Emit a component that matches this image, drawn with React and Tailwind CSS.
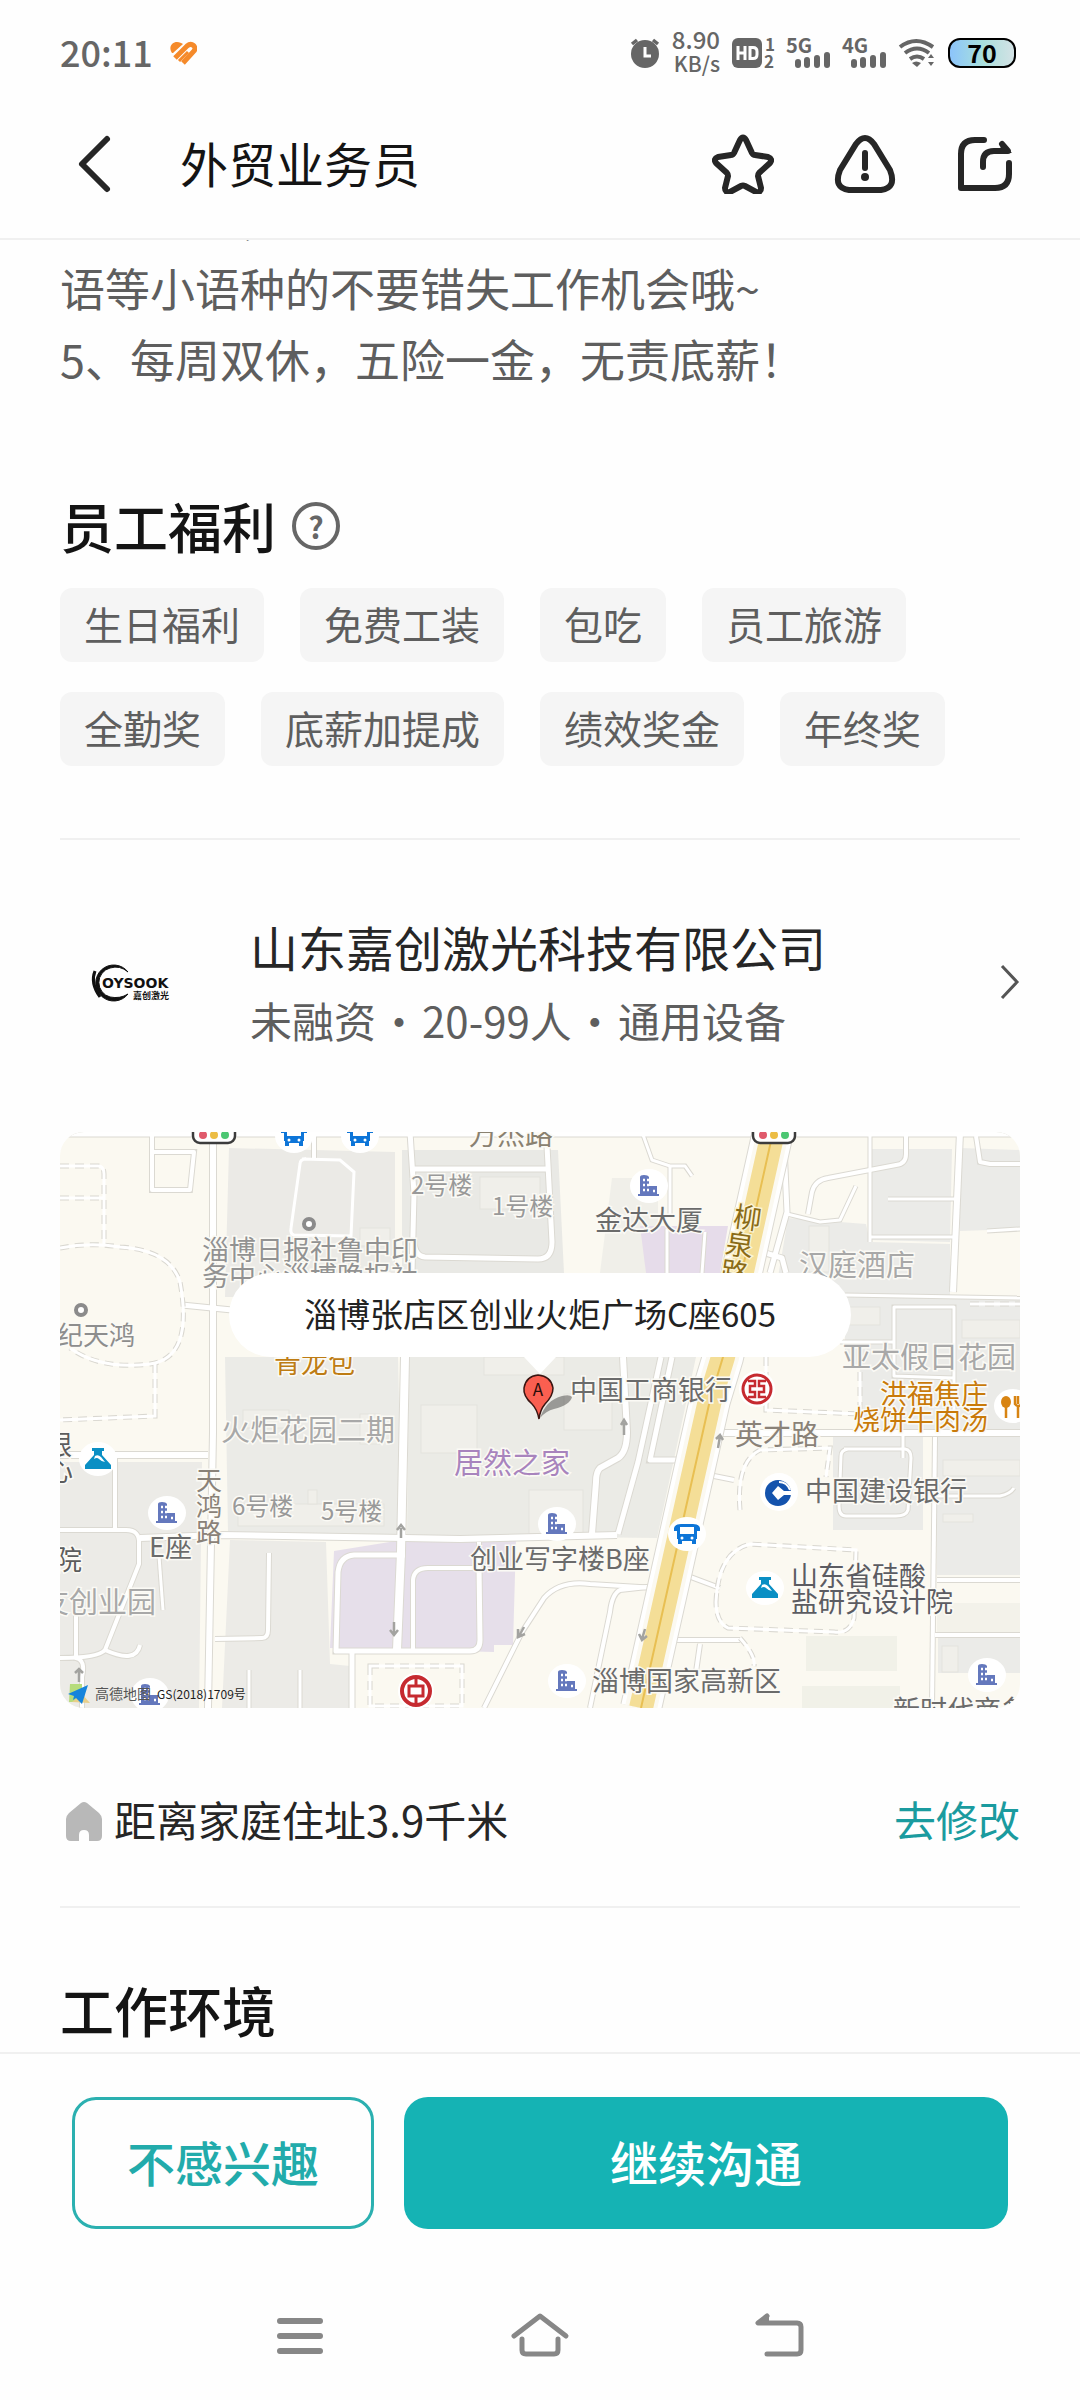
const BENEFITS = [
  "生日福利",
  "免费工装",
  "包吃",
  "员工旅游",
  "全勤奖",
  "底薪加提成",
  "绩效奖金",
  "年终奖",
];

// street map geometry, all in the map's own 960x576 space
const BLOCKS = [
  ["169,16 335,20 335,165 165,165", "#ebeae6"],
  ["342,18 498,18 504,141 342,141", "#e9e9e5"],
  ["165,225 338,225 342,403 168,400", "#ebebe7"],
  ["349,225 636,225 597,406 347,403", "#ebebe6"],
  ["0,330 142,330 139,576 0,576", "#ecebe7"],
  ["170,408 266,410 270,532 290,534 290,576 162,576", "#ecebe7"],
  ["274,419 342,408 456,408 453,513 434,513 434,520 270,516", "#e6dfea"],
  ["552,46 598,46 598,141 540,141", "#f0efe9"],
  ["580,94 668,94 660,141 586,141", "#e6dcea"],
  ["810,17 892,17 890,110 810,108", "#ebebe8"],
  ["728,86 806,92 810,110 890,112 890,163 715,163", "#ebebe8"],
  ["900,16 960,18 960,97 900,99", "#ebebe8"],
  ["785,164 960,166 960,300 804,300 800,236 785,225", "#ebebe8"],
  ["773,303 863,303 863,398 773,398", "#ebebe8"],
  ["877,305 960,305 960,443 877,443", "#ebebe8"],
  ["878,505 960,505 960,541 878,541", "#ebebe8"],
  ["746,504 837,504 837,539 746,539", "#f1f1e8"],
  ["742,554 840,554 840,576 742,576", "#f1f1e8"],
  ["877,471 960,471 960,502 877,502", "#f3f2ea"],
];

const BUILDINGS = [
  [420, 45, 60, 32],
  [300, 96, 30, 18],
  [183, 278, 46, 18],
  [300, 282, 20, 30],
  [178, 372, 146, 22],
  [248, 358, 9, 14],
  [361, 273, 56, 48],
  [424, 225, 80, 18],
  [504, 262, 48, 36],
  [469, 358, 54, 44],
  [749, 94, 20, 46],
  [770, 175, 50, 18],
  [902, 188, 58, 18],
  [883, 328, 77, 16],
  [883, 382, 30, 8],
  [882, 514, 16, 26],
];

const ROADS = [
  ["M0 2H960", 5],
  ["M153 0V300L148 576", 6],
  ["M92 0V58H130L134 20H94", 4],
  ["M254 0V26", 4],
  ["M350 0L354 62L352 141", 5],
  ["M354 37H488", 5],
  ["M487 14L492 110Q492 127 478 127L365 125Q354 124 354 108", 5],
  ["M122 173L172 178", 5],
  ["M345 225L341 420L337 518", 8],
  ["M0 323H148", 6],
  ["M55 323V396", 4],
  ["M80 406L160 403L345 406L400 407L557 403", 6],
  ["M0 398H66Q80 398 79 412V432L45 518Q38 526 0 526", 4],
  ["M16 480V526Q26 528 22 545V576", 4],
  ["M45 518Q76 532 80 513", 4],
  ["M99 424L103 478", 3],
  ["M155 507L202 506Q208 506 208 498L209 421", 4],
  ["M189 538V576M240 538V576", 3],
  ["M345 423H294Q280 424 278 440L276 519H410Q420 519 420 508L419 434", 5],
  ["M353 519V448Q354 436 368 436H419V410", 4],
  ["M292 520V576", 5],
  ["M563 225L567 300Q567 320 558 326L540 336Q536 340 536 350L532 402", 6],
  ["M601 225L578 330L558 402", 5],
  ["M612 225L590 328H626", 5],
  ["M696 0L686 60", 3],
  ["M724 14L727 80L710 141M702 120L722 126L726 141", 5],
  ["M727 82L760 90L780 88L796 54", 3],
  ["M748 82L752 60Q755 48 768 46L836 33Q846 32 846 22V4", 4],
  ["M810 4V110", 3],
  ["M900 0L893 160", 6],
  ["M828 67H897M810 105H894M927 99L960 97", 3],
  ["M916 4L920 30L930 32H960", 4],
  ["M785 163L960 166", 3],
  ["M780 210H834V175H894V300M834 210V244L894 246", 3],
  ["M657 301H960", 6],
  ["M875 305L872 576", 4],
  ["M877 448H960M875 503H960", 4],
  ["M784 317H845Q851 318 851 326L848 378Q846 384 836 384H786Q779 384 779 374L781 324Q781 318 788 317", 3],
  ["M843 301V326", 3],
  ["M877 364H940Q950 362 954 356", 3],
  ["M580 141V225M607 97V141M645 100L642 141", 3],
  ["M582 0L592 28L610 34H625L632 44", 3],
  ["M610 34V82", 3],
  ["M654 344L674 348M628 444L660 456M614 508H680M640 512L636 540", 4],
  ["M596 454L560 458Q552 462 550 480L530 576", 4],
  ["M596 456L530 452Q500 448 484 466L462 500L424 576", 4],
];

const DASHED = [
  "M0 34H38Q44 34 44 42V114M0 66H44",
  "M0 116Q30 110 60 115Q110 118 120 150Q134 226 90 232Q40 238 10 216",
  "M95 232V284L0 288",
  "M706 225V278L800 282M800 240V300",
  "M680 378Q676 330 700 318L770 316L766 345",
  "M656 470Q658 420 690 412L796 418L794 486Q790 502 774 500L668 496Q656 490 656 470",
  "M310 534H402V574H310Z",
  "M680 506Q696 524 694 534",
  "M910 172H960",
];

const MAP_LABELS = [
  ["万杰路", 409, 13, 28, "#8a8170"],
  ["2号楼", 351, 62, 24, "#999999"],
  ["1号楼", 432, 83, 24, "#999999"],
  ["金达大厦", 535, 98, 27, "#6b6b6b"],
  ["淄博日报社鲁中印", 142, 128, 27, "#929292"],
  ["务中心淄博晚报社", 142, 154, 27, "#929292"],
  ["纪天鸿", -3, 213, 26, "#8d8d8d"],
  ["青龙包", 214, 241, 27, "#be7c14"],
  ["中国工商银行", 510, 268, 27, "#6b6b6b"],
  ["汉庭酒店", 739, 144, 29, "#a8a8a8"],
  ["亚太假日花园", 782, 236, 29, "#a8a8a8"],
  ["洪福焦庄", 820, 272, 27, "#c97a0a"],
  ["烧饼牛肉汤", 793, 298, 27, "#c97a0a"],
  ["火炬花园二期", 161, 309, 29, "#a8a8a8"],
  ["银", -15, 323, 27, "#5c5c5c"],
  ["心", -14, 349, 27, "#5c5c5c"],
  ["天", 136, 358, 26, "#8a8278"],
  ["鸿", 136, 384, 26, "#8a8278"],
  ["路", 136, 410, 26, "#8a8278"],
  ["6号楼", 172, 383, 24, "#999999"],
  ["5号楼", 261, 388, 24, "#999999"],
  ["E座", 89, 425, 27, "#6b6b6b"],
  ["院", -5, 438, 27, "#5c5c5c"],
  ["友创业园", -20, 481, 29, "#a8a8a8"],
  ["居然之家", 394, 342, 29, "#a884bd"],
  ["英才路", 675, 313, 28, "#8a8278"],
  ["中国建设银行", 745, 369, 27, "#6b6b6b"],
  ["创业写字楼B座", 410, 437, 27, "#6b6b6b"],
  ["山东省硅酸", 731, 454, 27, "#5c5c62"],
  ["盐研究设计院", 731, 480, 27, "#5c5c62"],
  ["淄博国家高新区", 532, 559, 27, "#6b6b6b"],
  ["新时代商务", 833, 588, 27, "#6b6b6b"],
];

function Signal({ label }) {
  return (
    <svg viewBox="0 0 46 32" className="h-8 w-[46px] overflow-visible" fill="#666666">
      <text x="0" y="16" fontSize="20" fontWeight="700">{label}</text>
      <rect x="9" y="22" width="6" height="9" rx="3" />
      <rect x="18" y="20" width="6" height="11" rx="3" />
      <rect x="28" y="18" width="6" height="13" rx="3" />
      <rect x="38" y="15" width="6" height="16" rx="3" />
    </svg>
  );
}

function StatusBar() {
  return (
    <div className="flex h-[90px] items-center pt-4 pr-16 pl-[60px] text-[#666666]">
      <span className="pb-1 text-4xl leading-none font-medium">20:11</span>
      <svg viewBox="0 0 28 25" className="ml-4 h-[25px] w-7" fill="none" stroke="#f58a2a" strokeLinecap="butt">
        <path d="M3 12C-1 6 3 1 8 1c3 0 4 1 6 2L4 12z" fill="#f58a2a" stroke="none" />
        <path d="M6 17L18 5c5-4 10 1 7 5L14 22" strokeWidth="5" />
        <path d="M10 20l9-9" strokeWidth="3" />
      </svg>
      <div className="ml-auto flex items-center">
        <svg viewBox="0 0 30 30" className="size-[30px]">
          <circle cx="15" cy="16" r="14" fill="#666666" />
          <path d="M2 6l5-4M28 6l-5-4" stroke="#666666" strokeWidth="3.500" />
          <path d="M15 9v9h6" fill="none" stroke="#ffffff" strokeWidth="3" />
        </svg>
        <div className="ml-3 flex flex-col items-end pb-1 text-2xl leading-[24px] font-medium">
          <span>8.90</span>
          <span className="text-[21px] leading-[24px]">KB/s</span>
        </div>
        <svg viewBox="0 0 44 32" className="ml-3 h-8 w-11 overflow-visible" fill="#666666">
          <rect x="0" y="1" width="30" height="30" rx="6" />
          <path d="M6 9v14M13 9v14M6 16h7M18 10.500h3q4 0 4 4v3q0 4-4 4h-3z" fill="none" stroke="#ffffff" strokeWidth="3" />
          <text x="33" y="14" fontSize="17" fontWeight="700">1</text>
          <text x="32" y="31" fontSize="17" fontWeight="700">2</text>
        </svg>
        <div className="ml-2.5 flex gap-2.5">
          <Signal label="5G" />
          <Signal label="4G" />
        </div>
        <svg viewBox="0 0 38 30" className="ml-2.5 h-[30px] w-[38px]" fill="none" stroke="#666666" strokeWidth="4">
          <path d="M2 9q16-12 33 0M7 15q12-9 24 0M12 21q7-5 14 0" />
          <path d="M14 25q4-3 9 0l-4 4z" fill="#666666" stroke="none" />
          <path d="M30 20l3-4 3 4zM30 24l3 4 3-4z" fill="#666666" stroke="none" />
        </svg>
        <span className="ml-3 flex h-[30px] w-[68px] items-center justify-center rounded-xl border-2 border-black bg-linear-to-r from-[#8cc4fb] via-[#a8dfdc] to-[#d3e2e5] pb-0.5 text-[25px] leading-none font-bold text-black">
          70
        </span>
      </div>
    </div>
  );
}

function TopBar() {
  return (
    <header className="sticky top-0 z-10 border-b-2 border-[#f0f0f0] bg-[#fefefe]">
      <StatusBar />
      <div className="flex h-[148px] items-center pr-[66px] pl-[76px] text-[#262626]">
        <button aria-label="返回">
          <svg viewBox="0 0 36 60" className="h-[60px] w-9" fill="none" stroke="currentColor" strokeWidth="6" strokeLinecap="round" strokeLinejoin="round">
            <path d="M31 5L6 30l25 25" />
          </svg>
        </button>
        <h1 className="ml-[68px] pb-1 text-5xl leading-none text-[#141414]">外贸业务员</h1>
        <div className="ml-auto flex items-center gap-[60px]">
          <button aria-label="收藏">
            <svg viewBox="0 0 62 60" className="h-[60px] w-[62px]" fill="none" stroke="currentColor" strokeWidth="6" strokeLinejoin="round">
              <path d="M28 6q3-5 6 0l6 13q1 2 3 2l13 2q5 2 2 6L47 39q-1 1-1 3l3 12q0 5-5 4L33 52q-2-1-4 0l-11 6q-5 1-5-4l3-12q0-2-1-3L4 29q-3-4 2-6l13-2q2 0 3-2z" />
            </svg>
          </button>
          <button aria-label="举报">
            <svg viewBox="0 0 62 60" className="h-[60px] w-[62px]" fill="none" stroke="currentColor" strokeWidth="6" strokeLinecap="round">
              <path d="M22 10q9-12 18 0l16 26q7 18-9 20H15Q-1 54 6 36z" />
              <path d="M31 19v15" />
              <circle cx="31" cy="43" r="4" fill="currentColor" stroke="none" />
            </svg>
          </button>
          <button aria-label="分享">
            <svg viewBox="0 0 58 60" className="h-[60px] w-[58px]" fill="none" stroke="currentColor" strokeWidth="6" strokeLinecap="round" strokeLinejoin="round">
              <path d="M28 6H19Q5 6 5 20v34h34q14 0 14-14V29" />
              <path d="M27 33v-5q0-11 11-11h14l-6-7" />
              <path d="M45 9l11 10H44z" fill="currentColor" stroke="none" />
            </svg>
          </button>
        </div>
      </div>
    </header>
  );
}

function BuildingPin({ x, y }) {
  return (
    <g transform={`translate(${x} ${y})`}>
      <ellipse rx="19" ry="17" fill="#ffffff" />
      <path d="M-11 10v-2h2V-9q0-2 4-2t5 2V0h8v8h2v2z" fill="#6478bd" />
      <path d="M-6-6h2M-2-6h2M-6-1h2M-2-1h2M-6 4h2M-2 4h2M4 5h2" stroke="#ffffff" strokeWidth="2.500" />
    </g>
  );
}

function BusPin({ x, y }) {
  return (
    <g transform={`translate(${x} ${y})`}>
      <ellipse rx="19" ry="17" fill="#ffffff" />
      <path d="M-13-3v-3q1-4 7-4H6q6 0 7 4v3h-3V5h-1v5H5V7H-5v3h-4V5h-1v-8z" fill="#0d75d8" />
      <path d="M-7-7H7v7H-7z" fill="#ffffff" />
      <circle cx="-5" cy="4" r="1.500" fill="#ffffff" />
      <circle cx="5" cy="4" r="1.500" fill="#ffffff" />
    </g>
  );
}

function FlaskPin({ x, y }) {
  return (
    <g transform={`translate(${x} ${y})`}>
      <ellipse rx="19" ry="17" fill="#ffffff" />
      <path d="M-6-11H6v3H4v4l9 10v4h-26V6l9-10v-4h-2z" fill="#0a8fc4" />
      <path d="M-3-3q3-2 6 1l4 5q-3 0-6-3-2-2-5 0z" fill="#ffffff" />
    </g>
  );
}

function TrafficLight({ x }) {
  return (
    <g>
      <rect x={x} y="-10" width="42" height="21" rx="7" fill="#ffffff" stroke="#3c3c3c" strokeWidth="2.500" />
      <circle cx={x + 10} cy="3" r="4" fill="#e05a6c" />
      <circle cx={x + 21} cy="3" r="4" fill="#ecbd45" />
      <circle cx={x + 32} cy="3" r="4" fill="#4cc773" />
    </g>
  );
}

function OfficeMap() {
  return (
    <div className="relative mt-[78px] overflow-hidden rounded-3xl">
      <svg viewBox="0 0 960 576" className="block h-auto w-full bg-[#fbf9f1]">
        {BLOCKS.map(([points, fill]) => (
          <polygon key={points} points={points} fill={fill} />
        ))}
        {BUILDINGS.map(([x, y, w, h]) => (
          <rect key={`${x}-${y}`} x={x} y={y} width={w} height={h} fill="#f0efea" stroke="#e4e3dd" />
        ))}

        <g fill="none" stroke="#dbd9d2">
          {ROADS.map(([d, w]) => <path key={d} d={d} strokeWidth={w + 2} />)}
        </g>
        <g fill="none" stroke="#ffffff" strokeLinejoin="round">
          {ROADS.map(([d, w]) => <path key={d} d={d} strokeWidth={w} />)}
        </g>
        <g fill="none">
          {DASHED.map((d) => <path key={d} d={d} stroke="#d9d7d0" strokeWidth="5" strokeDasharray="9 6" />)}
          {DASHED.map((d) => <path key={d} d={d} stroke="#ffffff" strokeWidth="3" />)}
        </g>
        <path d="M242 27L280 28L294 40L291 104L234 103Q230 102 231 96L240 32Q240 27 246 27" fill="none" stroke="#ffffff" strokeWidth="3" />

        <path d="M713 0L663 225L650 268L581 576" fill="none" stroke="#dbd9d2" strokeWidth="42" />
        <path d="M713 0L663 225L650 268L581 576" fill="none" stroke="#ffffff" strokeWidth="40" />
        <path d="M713 0L663 225L650 268L581 576" fill="none" stroke="#fbf9f1" strokeWidth="32" />
        <path d="M713 0L663 225L650 268L581 576" fill="none" stroke="#f4de97" strokeWidth="24" />
        <path d="M713 0L663 225L650 268L581 576" fill="none" stroke="#e8bf52" strokeWidth="2" />

        <g fill="none" stroke="#a3a3a0" strokeWidth="2.500">
          <path d="M341 406v-10M337 398l4-5 4 5M334 490v12M330 498l4 5 4-5" />
          <path d="M564 303v-12M561 293l3-5 3 5M464 495l-5 9M458 497v8l7-3" />
          <path d="M658 316l2-12M656 307l4-4 3 5M585 497l-3 10M579 502l3 6 5-4M19 550v-12M15 541l4-4 4 4" />
        </g>

        <g fill="#ffffff" stroke="#8b8b8b" strokeWidth="4">
          <circle cx="249" cy="92" r="5" />
          <circle cx="21" cy="178" r="5" />
        </g>

        {MAP_LABELS.map(([text, x, y, size, fill]) => (
          <text key={`${text}-${y}`} x={x} y={y} fontSize={size} fill={fill} stroke="#fbfaf5" strokeWidth="3" paintOrder="stroke">
            {text}
          </text>
        ))}
        <g fontSize="28" fill="#8a6b16" stroke="#fbf3d4" strokeWidth="3" paintOrder="stroke" textAnchor="middle">
          <text transform="translate(686 96) rotate(8)">柳</text>
          <text transform="translate(678 123) rotate(8)">泉</text>
          <text transform="translate(673 151) rotate(8)">路</text>
        </g>

        <TrafficLight x={133} />
        <TrafficLight x={693} />
        <BusPin x={234} y={4} />
        <BusPin x={300} y={4} />
        <BusPin x={627} y={402} />
        <BuildingPin x={589} y={54} />
        <BuildingPin x={107} y={381} />
        <BuildingPin x={497} y={392} />
        <BuildingPin x={507} y={549} />
        <BuildingPin x={927} y={543} />
        <BuildingPin x={90} y={563} />
        <FlaskPin x={38} y={327} />
        <FlaskPin x={705} y={456} />

        {/* bank logos */}
        <g fill="none" stroke="#c62a30" strokeWidth="2.500">
          <circle cx="697" cy="257" r="18" fill="#ffffff" stroke="none" />
          <circle cx="697" cy="257" r="14" strokeWidth="3" />
          <path d="M688 249h7v5h-5v6h5v5h-7M706 249h-7v5h5v6h-5v5h7" />
          <circle cx="356" cy="559" r="18" fill="#ffffff" stroke="none" />
          <circle cx="356" cy="559" r="14" strokeWidth="4" />
          <path d="M349 554h14v10h-14zM356 545v9M356 564v9" strokeWidth="3" />
        </g>
        <circle cx="719" cy="360" r="19" fill="#ffffff" />
        <circle cx="718" cy="361" r="13" fill="#1453ad" />
        <path d="M718 354l6 5h9v4h-9l-6 5-6-7z" fill="#ffffff" />
        <path d="M719 350q8 0 11 8" fill="none" stroke="#ffffff" strokeWidth="2" />
        <ellipse cx="953" cy="274" rx="19" ry="17" fill="#ffffff" />
        <ellipse cx="946" cy="270" rx="5" ry="6" fill="#d88412" />
        <path d="M946 274v12M958 274v12M955 264v8q3 4 7 0v-8M958 264v8" fill="none" stroke="#d88412" strokeWidth="2.500" />

        {/* office marker */}
        <path d="M480 286q6-18 22-22 8-2 10 1-2 8-18 12-8 2-14 9z" fill="#000000" opacity="0.350" />
        <path d="M479 287q-2-10-7-15-9-8-8-16 2-12 14-13 13 1 15 13 0 8-8 16-5 6-6 15z" fill="#fa5f50" stroke="#3a1512" strokeWidth="1.500" />
        <text x="478" y="264" fontSize="17" textAnchor="middle" fill="#2a0d0a">A</text>

        {/* map provider */}
        <path d="M10 552h12v10l-8 8h-5z" fill="#b6dc7c" />
        <path d="M12 570l10-8 8 9z" fill="#e8cf8a" />
        <path d="M8 562l20-9-6 19-6-6-3 2 1-4z" fill="#1684dc" />
        <text x="35" y="567" fontSize="14" fill="#555555">高德地图</text>
        <text x="97" y="567" fontSize="12" fill="#1c1c1c">GS(2018)1709号</text>
      </svg>

      <div className="absolute top-[141px] left-1/2 flex -translate-x-1/2 flex-col items-center">
        <p className="rounded-full bg-white px-[75px] pb-1 text-[33px] leading-[80px] whitespace-nowrap text-[#222222]">
          淄博张店区创业火炬广场C座605
        </p>
        <svg viewBox="0 0 32 17" className="h-[17px] w-8">
          <path d="M0 0h32L16 17z" fill="#ffffff" />
        </svg>
      </div>
    </div>
  );
}

function Company() {
  return (
    <a href="#company" className="mt-[70px] flex items-center">
      <svg viewBox="0 0 144 60" className="h-[60px] w-36">
        <path d="M68 20A18 18 0 1 0 68 42Q60 47 50 45A15 15 0 0 1 50 16Q60 13 68 20z" fill="#111111" stroke="#111111" />
        <path d="M35 19q-5 12 5 26" fill="none" stroke="#111111" strokeWidth="3" />
        <text x="42" y="36" fontSize="14" fontWeight="700" fill="#111111" stroke="#fefefe" strokeWidth="3" paintOrder="stroke" fontFamily="DejaVu Sans, sans-serif">OYSOOK</text>
        <text x="73" y="47" fontSize="9" fontWeight="700" fill="#111111">嘉创激光</text>
      </svg>
      <div className="ml-[46px] flex flex-col gap-2 pb-1">
        <h2 className="text-5xl leading-[72px] text-[#262626]">山东嘉创激光科技有限公司</h2>
        <p className="flex gap-0.5 text-[42px] leading-[60px] text-[#5e5e5e]">
          <span>未融资</span>
          <span>・</span>
          <span>20-99人</span>
          <span>・</span>
          <span>通用设备</span>
        </p>
      </div>
      <svg viewBox="0 0 20 36" className="ml-auto h-9 w-5" fill="none" stroke="#555555" strokeWidth="3">
        <path d="M2 2l15 16L2 34" />
      </svg>
    </a>
  );
}

function BottomNav() {
  return (
    <nav className="flex h-32 items-center justify-center gap-[184px] text-[#878787]">
      <button aria-label="最近任务">
        <svg viewBox="0 0 52 48" className="h-12 w-[52px]" stroke="currentColor" strokeWidth="6" strokeLinecap="round">
          <path d="M6 9h40M6 24h40M6 39h40" />
        </svg>
      </button>
      <button aria-label="主屏幕">
        <svg viewBox="0 0 60 48" className="h-12 w-[60px]" fill="none" stroke="currentColor" strokeWidth="5" strokeLinecap="round" strokeLinejoin="round">
          <path d="M4 24L30 4l26 20M12 27v11q0 4 4 4h28q4 0 4-4V27" />
        </svg>
      </button>
      <button aria-label="后退">
        <svg viewBox="0 0 52 48" className="h-12 w-[52px]" fill="none" stroke="currentColor" strokeWidth="5" strokeLinecap="round" strokeLinejoin="round">
          <path d="M13 4L4 11h39q4 0 4 4v23q0 4-4 4H13" />
          <path d="M4 10L15 3v9H5z" fill="currentColor" stroke="none" />
        </svg>
      </button>
    </nav>
  );
}

export default function App() {
  return (
    <div className="bg-[#fefefe] font-['Noto_Sans_CJK_SC',sans-serif]">
      <TopBar />

      <main className="px-[60px]">
        <p className="-mt-[59px] text-[45px] leading-[71px] text-[#5e5e5e]">
          优先录取，懂俄语、日语、韩语、法语、西班牙语等小语种的不要错失工作机会哦~
          <br />
          5、每周双休，五险一金，无责底薪！
        </p>

        <section className="mt-[92px]">
          <div className="flex items-center gap-4">
            <h2 className="text-[54px] leading-[80px] font-medium text-[#141414]">员工福利</h2>
            <button aria-label="福利说明" className="flex size-12 items-center justify-center rounded-full border-4 border-[#666666] text-3xl leading-none font-bold text-[#666666]">
              ?
            </button>
          </div>
          <ul className="mt-[22px] flex flex-wrap gap-x-9 gap-y-[30px]">
            {BENEFITS.map((item) => (
              <li key={item} className="rounded-xl bg-[#f5f5f5] px-6 pb-1 text-[39px] leading-[70px] text-[#5e5e5e]">
                {item}
              </li>
            ))}
          </ul>
        </section>

        <hr className="mt-[72px] border-t-2 border-[#f0f0f0]" />

        <Company />
        <OfficeMap />

        <div className="mt-[83px] flex items-center text-[42px] leading-[56px]">
          <svg viewBox="0 0 36 40" className="ml-1.5 h-10 w-9">
            <path d="M15 2q3-2 6 0l12 10q3 3 3 6v17q0 5-5 5h-8v-6q0-5-5-5t-5 5v6H5q-5 0-5-5V18q0-3 3-6z" fill="#b8b8b8" />
          </svg>
          <p className="ml-3 pb-1 text-[#262626]">距离家庭住址3.9千米</p>
          <a href="#address" className="ml-auto pb-1 text-[#1a9b9f]">去修改</a>
        </div>

        <hr className="mt-[55px] border-t-2 border-[#f0f0f0]" />

        <h2 className="mt-[62px] pb-0.5 text-[54px] leading-[80px] font-medium text-[#141414]">工作环境</h2>
      </main>

      <footer className="border-t-2 border-[#f0f0f0]">
        <div className="grid grid-cols-[1fr_2fr] gap-[30px] px-[72px] py-[43px] text-5xl font-medium">
          <button className="h-[132px] rounded-3xl border-3 border-[#2bb0b0] pb-1 text-[#22abab]">不感兴趣</button>
          <button className="h-[132px] rounded-3xl bg-[#15b3b4] pb-1 text-white">继续沟通</button>
        </div>
        <BottomNav />
      </footer>
    </div>
  );
}
